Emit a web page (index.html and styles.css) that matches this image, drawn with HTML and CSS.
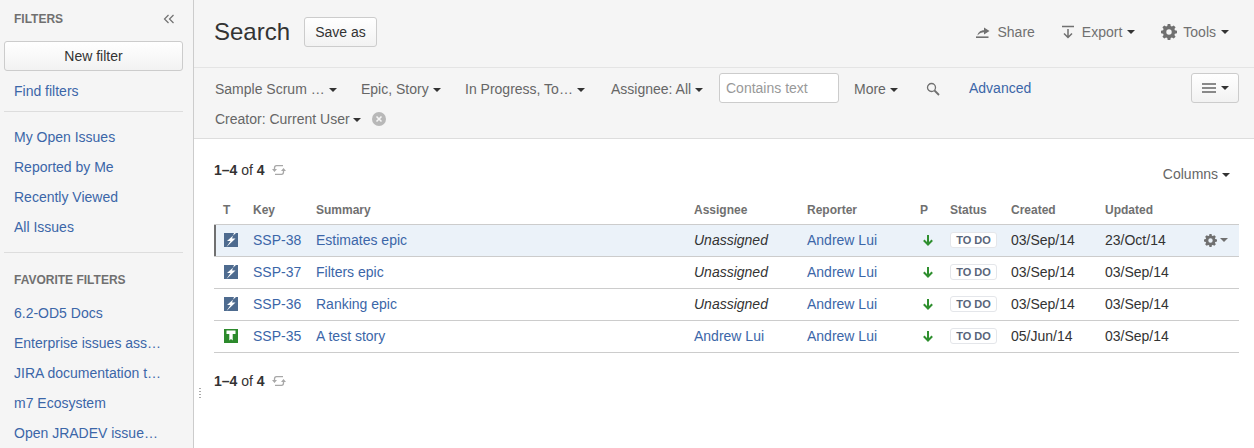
FILE: index.html
```html
<!DOCTYPE html>
<html lang="en">
<head>
<meta charset="utf-8">
<title>Search</title>
<link rel="stylesheet" href="styles.css">
</head>
<body>
<svg class="defs" width="0" height="0" aria-hidden="true">
  <defs>
    <symbol id="gear" viewBox="0 0 16 16">
      <path fill-rule="evenodd" d="M6.700 0h2.600l.4 2.100 1.200.5 1.800-1.200 1.900 1.900-1.200 1.800.5 1.200 2.100.4v2.600l-2.100.4-.5 1.200 1.200 1.800-1.900 1.900-1.800-1.200-1.200.5-.4 2.100H6.700l-.4-2.100-1.200-.5-1.800 1.200-1.900-1.900 1.200-1.800-.5-1.200L0 9.300V6.700l2.100-.4.5-1.200-1.200-1.800 1.900-1.900 1.800 1.200 1.200-.5zM8 5.300a2.700 2.700 0 1 0 0 5.400 2.700 2.700 0 0 0 0-5.400z"/>
    </symbol>
    <symbol id="sync" viewBox="0 0 14 14">
      <path d="M11 2.700H4.500Q2.500 2.700 2.500 5V6.500M3 11.300H9.500Q11.500 11.300 11.500 9V7.500" fill="none" stroke="currentColor" stroke-width="1.300"/>
      <path d="M0 6H5L2.500 9zM9 8H14L11.500 5z" fill="currentColor"/>
    </symbol>
    <symbol id="epic" viewBox="0 0 14 14">
      <rect width="14" height="14" fill="#4e6b8f"/>
      <path d="M12 0 3 8H6.500L2.500 14 11.500 5.500H8L10 0z" fill="#fff"/>
    </symbol>
    <symbol id="story" viewBox="0 0 14 14">
      <rect width="14" height="14" fill="#2c8a2c"/>
      <path d="M2.500 1.500H11.500V5H8.700V11.500L7 10 5.300 11.500V5H2.500z" fill="#fff"/>
    </symbol>
    <symbol id="down" viewBox="0 0 12 12">
      <path d="M6 1V10.500M1.800 6.300 6 10.500 10.200 6.300" fill="none" stroke="#2f8f2f" stroke-width="2"/>
    </symbol>
  </defs>
</svg>
<div class="app">
  <aside class="sidebar">
    <div class="side-head">
      <h2 class="side-title">FILTERS</h2>
      <svg class="collapse" width="12" height="10" viewBox="0 0 12 10"><path d="M5.500 1 1.500 5 5.500 9M10.500 1 6.500 5 10.500 9" fill="none" stroke="#707070" stroke-width="1.200"/></svg>
    </div>
    <button class="btn new-filter">New filter</button>
    <ul class="side-list first"><li><a>Find filters</a></li></ul>
    <ul class="side-list ruled">
      <li><a>My Open Issues</a></li>
      <li><a>Reported by Me</a></li>
      <li><a>Recently Viewed</a></li>
      <li><a>All Issues</a></li>
    </ul>
    <div class="side-rule"></div>
    <h2 class="side-title fav">FAVORITE FILTERS</h2>
    <ul class="side-list">
      <li><a>6.2-OD5 Docs</a></li>
      <li><a>Enterprise issues ass…</a></li>
      <li><a>JIRA documentation t…</a></li>
      <li><a>m7 Ecosystem</a></li>
      <li><a>Open JRADEV issue…</a></li>
    </ul>
  </aside>
  <main class="main">
    <div class="grip" aria-hidden="true"></div>
    <header class="page-head">
      <h1 class="title">Search</h1>
      <button class="btn save">Save as</button>
      <div class="head-tools">
        <span class="tool">
          <svg class="tool-ico" width="14" height="12" viewBox="0 0 14 12"><path d="M0 11.200H12.500" stroke="#707070" stroke-width="1.600"/><path d="M1.500 9.500C2 6.500 4.500 4.300 8 4.300V1.500L13.500 5 8 8.500V6.300C5.500 6.300 3.500 7.300 1.500 9.500z" fill="#707070"/></svg>
          <span>Share</span>
        </span>
        <span class="tool">
          <svg class="tool-ico" width="14" height="14" viewBox="0 0 14 14"><path d="M1 1.500H13M7 4V12.500M3 8.500 7 12.500 11 8.500" fill="none" stroke="#707070" stroke-width="1.500"/></svg>
          <span>Export</span><i class="caret"></i>
        </span>
        <span class="tool">
          <svg class="gear-lg" width="16" height="16"><use href="#gear"/></svg>
          <span>Tools</span><i class="caret"></i>
        </span>
      </div>
    </header>
    <section class="filterbar">
      <div class="filter-row one">
        <span class="crit c1">Sample Scrum … <i class="caret"></i></span>
        <span class="crit c2">Epic, Story <i class="caret"></i></span>
        <span class="crit c3">In Progress, To… <i class="caret"></i></span>
        <span class="crit c4">Assignee: All <i class="caret"></i></span>
        <input class="text-filter" placeholder="Contains text">
        <span class="crit c5">More <i class="caret"></i></span>
        <svg class="search-ico" width="14" height="14" viewBox="0 0 14 14"><circle cx="5.500" cy="5.500" r="4" fill="none" stroke="#707070" stroke-width="1.300"/><path d="M8.500 8.500 13 13" stroke="#707070" stroke-width="1.800"/></svg>
        <a class="advanced">Advanced</a>
        <button class="btn layout-btn">
          <svg width="14" height="10" viewBox="0 0 14 10"><path d="M0 1H14M0 5H14M0 9H14" stroke="#666" stroke-width="1.500"/></svg>
          <i class="caret"></i>
        </button>
      </div>
      <div class="filter-row two">
        <span class="crit">Creator: Current User <i class="caret"></i></span>
        <svg class="clear" width="14" height="14" viewBox="0 0 14 14"><circle cx="7" cy="7" r="7" fill="#b8b8b8"/><path d="M4.500 4.500 9.500 9.500M9.500 4.500 4.500 9.500" stroke="#f5f5f5" stroke-width="1.600"/></svg>
      </div>
    </section>
    <section class="results">
      <div class="results-top">
        <div class="count"><b>1–4</b> of <b>4</b> <svg class="sync" width="14" height="14"><use href="#sync"/></svg></div>
        <span class="columns">Columns <i class="caret"></i></span>
      </div>
      <table class="issues">
        <colgroup>
          <col class="w-t"><col class="w-key"><col class="w-sum"><col class="w-ass"><col class="w-rep"><col class="w-p"><col class="w-st"><col class="w-cr"><col class="w-up"><col>
        </colgroup>
        <thead>
          <tr><th>T</th><th>Key</th><th>Summary</th><th>Assignee</th><th>Reporter</th><th>P</th><th>Status</th><th>Created</th><th>Updated</th><th></th></tr>
        </thead>
        <tbody>
          <tr class="focused">
            <td><svg class="type" width="14" height="14"><use href="#epic"/></svg></td>
            <td><a>SSP-38</a></td><td><a>Estimates epic</a></td><td><em>Unassigned</em></td><td><a>Andrew Lui</a></td>
            <td><svg class="prio" width="12" height="12"><use href="#down"/></svg></td>
            <td><span class="lozenge">TO DO</span></td><td>03/Sep/14</td><td>23/Oct/14</td>
            <td class="row-act"><svg class="gear-sm" width="13" height="13"><use href="#gear"/></svg><i class="caret soft"></i></td>
          </tr>
          <tr>
            <td><svg class="type" width="14" height="14"><use href="#epic"/></svg></td>
            <td><a>SSP-37</a></td><td><a>Filters epic</a></td><td><em>Unassigned</em></td><td><a>Andrew Lui</a></td>
            <td><svg class="prio" width="12" height="12"><use href="#down"/></svg></td>
            <td><span class="lozenge">TO DO</span></td><td>03/Sep/14</td><td>03/Sep/14</td><td></td>
          </tr>
          <tr>
            <td><svg class="type" width="14" height="14"><use href="#epic"/></svg></td>
            <td><a>SSP-36</a></td><td><a>Ranking epic</a></td><td><em>Unassigned</em></td><td><a>Andrew Lui</a></td>
            <td><svg class="prio" width="12" height="12"><use href="#down"/></svg></td>
            <td><span class="lozenge">TO DO</span></td><td>03/Sep/14</td><td>03/Sep/14</td><td></td>
          </tr>
          <tr>
            <td><svg class="type" width="14" height="14"><use href="#story"/></svg></td>
            <td><a>SSP-35</a></td><td><a>A test story</a></td><td><a>Andrew Lui</a></td><td><a>Andrew Lui</a></td>
            <td><svg class="prio" width="12" height="12"><use href="#down"/></svg></td>
            <td><span class="lozenge">TO DO</span></td><td>05/Jun/14</td><td>03/Sep/14</td><td></td>
          </tr>
        </tbody>
      </table>
      <div class="count bottom"><b>1–4</b> of <b>4</b> <svg class="sync" width="14" height="14"><use href="#sync"/></svg></div>
    </section>
  </main>
</div>
</body>
</html>
```
FILE: styles.css
```css
* { box-sizing: border-box; }
html, body { margin: 0; height: 100%; overflow: hidden; }
body {
  font-family: "Liberation Sans", Arial, sans-serif;
  font-size: 14px;
  line-height: 20px;
  color: #333;
  background: #fff;
}
a { color: #3b66a8; text-decoration: none; }
.defs { position: absolute; }
.app { display: flex; height: 448px; }

.sidebar {
  width: 194px;
  flex: none;
  background: #f5f5f5;
  border-right: 1px solid #ccc;
  padding: 0 10px 0 4px;
  overflow: hidden;
}
.side-head { display: flex; justify-content: space-between; align-items: center; height: 41px; padding: 0 8px 4px 10px; }
.side-title { margin: 0; font-size: 12px; font-weight: bold; line-height: 16px; color: #707070; }
.fav { padding: 0 10px; margin-top: 19px; }
.btn {
  font: inherit;
  color: #333;
  border: 1px solid #ccc;
  border-radius: 3px;
  background: linear-gradient(#fff, #f2f2f2);
}
.new-filter { display: block; width: 179px; height: 30px; padding: 0; }
.side-list { list-style: none; margin: 0; padding: 0; }
.side-list li { height: 30px; line-height: 30px; padding-left: 10px; white-space: nowrap; }
.side-list.first { margin-top: 5px; padding-bottom: 5px; border-bottom: 1px solid #ddd; width: 179px; }
.side-list.ruled { margin-top: 10px; }
.side-rule { width: 179px; height: 1px; background: #ddd; margin-top: 10px; }
.fav + .side-list { margin-top: 10px; }

.main { position: relative; flex: 1; min-width: 0; }
.grip {
  position: absolute; left: 5px; top: 388px; width: 2px; height: 12px;
  background: repeating-linear-gradient(#aaa 0 1px, transparent 1px 3px);
}
.page-head {
  display: flex; align-items: center; height: 68px;
  padding: 0 16px 4px 20px;
  background: #f5f5f5;
  border-bottom: 1px solid #e4e4e4;
}
.title { margin: 0; font-size: 24px; font-weight: normal; line-height: 30px; color: #333; }
.save { width: 73px; height: 30px; margin-left: 14px; padding: 0; }
.head-tools { margin-left: auto; display: flex; gap: 26px; padding-right: 9px; }
.tool { display: flex; align-items: center; color: #707070; white-space: nowrap; }
.tool-ico { margin-right: 7px; }
.gear-lg { margin-right: 6px; fill: #707070; }
.tool .caret { margin-left: 5px; }

.caret {
  display: inline-block; width: 0; height: 0; vertical-align: 2px;
  border-left: 4px solid transparent; border-right: 4px solid transparent;
  border-top: 4px solid #333;
}
.caret.soft { border-top-color: #707070; margin-left: 3px; vertical-align: 3px; }

.filterbar { height: 71px; padding: 5px 15px 0 21px; background: #f5f5f5; border-bottom: 1px solid #ddd; }
.filter-row { display: flex; align-items: center; height: 30px; white-space: nowrap; }
.crit { color: #666; padding-top: 2px; }
.c1 { width: 146px; flex: none; }
.c2 { width: 104px; flex: none; }
.c3 { width: 146px; flex: none; }
.c4 { width: 108px; flex: none; }
.text-filter {
  width: 120px; height: 30px; flex: none; padding: 0 6px 1px; margin-right: 15px;
  font: inherit; color: #333; background: #fff;
  border: 1px solid #ccc; border-radius: 3px; outline: none;
}
.text-filter::placeholder { color: #999; opacity: 1; }
.c5 { width: 72px; flex: none; }
.search-ico { flex: none; margin-top: 1px; }
.advanced { margin-left: 29px; }
.layout-btn {
  margin-left: auto; width: 48px; height: 30px; padding: 0;
  display: flex; align-items: center; justify-content: center; gap: 5px;
}
.clear { margin-left: 11px; margin-top: 2px; }

.results { padding: 0 15px 0 20px; }
.results-top { display: flex; justify-content: space-between; height: 59px; padding-top: 21px; }
.columns { color: #666; padding: 4px 9px 0 0; }
.count { color: #333; }
.sync { color: #a8a8a8; vertical-align: -2px; margin-left: 3px; }
.bottom { margin-top: 18px; }

.issues { width: 1025px; table-layout: fixed; border-collapse: collapse; }
.w-t { width: 30px; } .w-key { width: 63px; } .w-sum { width: 378px; }
.w-ass { width: 113px; } .w-rep { width: 113px; } .w-p { width: 30px; }
.w-st { width: 61px; } .w-cr { width: 94px; } .w-up { width: 94px; }
.issues th {
  height: 26px; padding: 0 0 1px 9px; text-align: left;
  font-size: 12px; font-weight: bold; color: #707070;
  border-bottom: 1px solid #ccc; vertical-align: middle;
}
.issues td {
  height: 32px; padding: 0 0 0 9px; white-space: nowrap;
  border-bottom: 1px solid #ccc; vertical-align: middle;
}
.focused td { background: #ebf2f9; }
.focused td:first-child { box-shadow: inset 2px 0 0 #707070; }
.issues em { color: #333; }
.type { display: block; margin-left: 1px; }
.prio { display: block; margin-left: 2px; }
.lozenge {
  display: block; height: 16px; width: 47px; text-align: center; margin-top: -1px;
  font-size: 11px; font-weight: bold; line-height: 14px; color: #59657a;
  background: #fff; border: 1px solid #e4e6ea; border-radius: 3px;
}
.row-act { text-align: right; padding-right: 11px !important; }
.gear-sm { fill: #707070; vertical-align: -2px; }
```
